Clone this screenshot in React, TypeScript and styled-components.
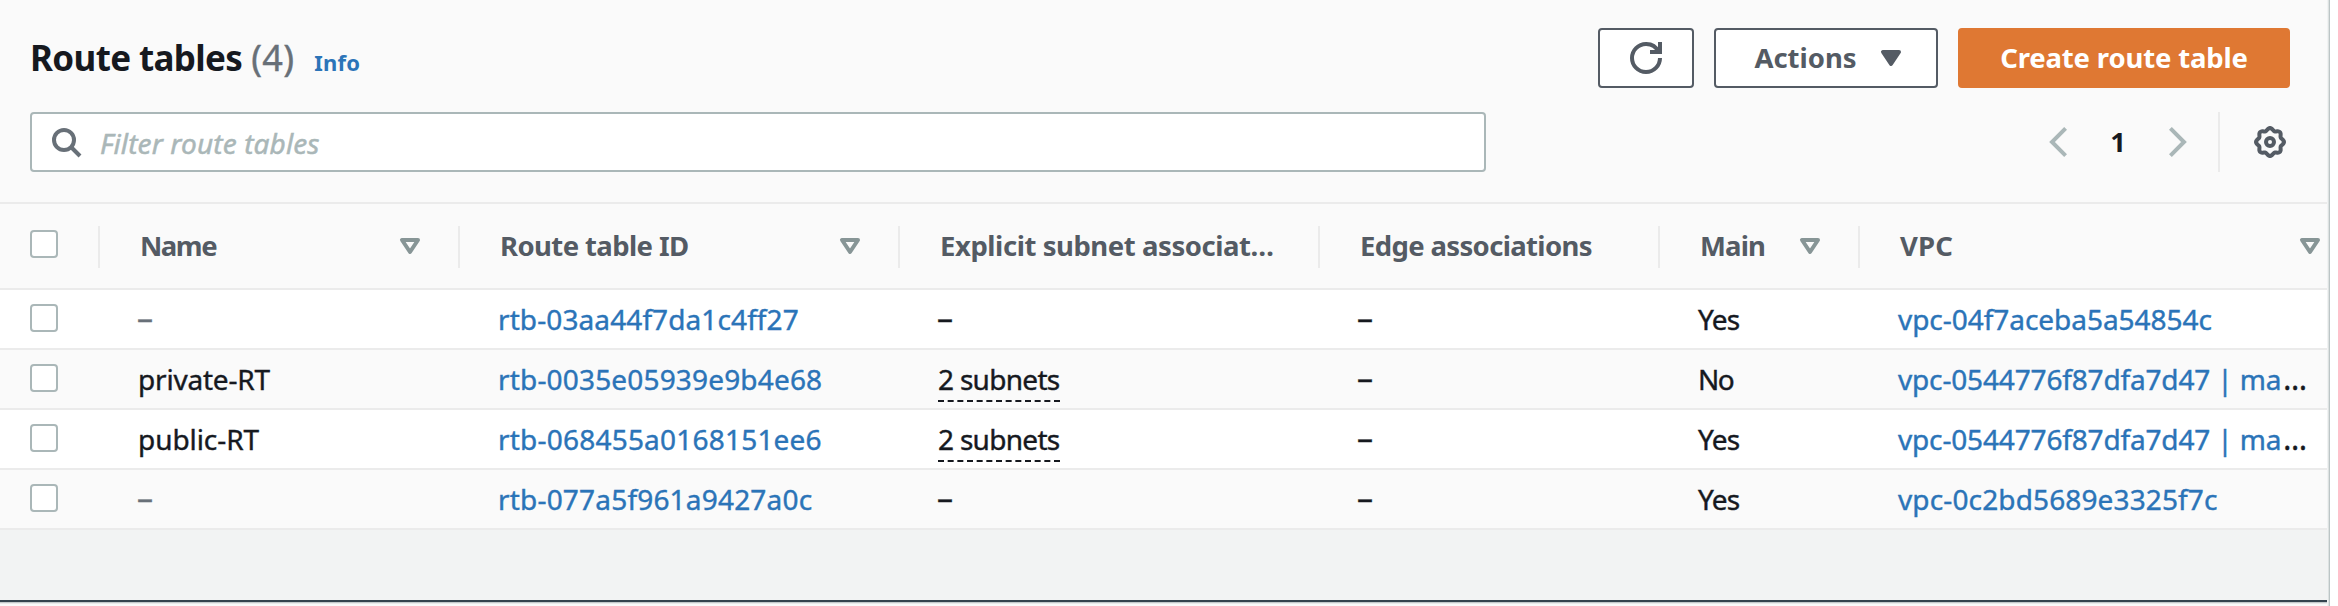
import React from "react";
import styled, { createGlobalStyle } from "styled-components";

const colors = {
  text: "#16191f",
  muted: "#545b64",
  faint: "#687078",
  link: "#2b74b8",
  line: "#ebebeb",
  control: "#aab7b8",
  panel: "#fafafa",
  empty: "#f2f3f3",
  sort: "#879596",
  primary: "#df7833",
};

const GlobalStyle = createGlobalStyle`
  *, *::before, *::after { box-sizing: border-box; }
  body {
    margin: 0;
    background: #fff;
    color: ${colors.text};
    font-family: "Noto Sans", "Open Sans", sans-serif;
    font-size: 28px;
    overflow: hidden;
  }
  svg { display: block; flex: none; }
`;

const Page = styled.div`
  display: flex;
  width: 2338px;
  height: 606px;
  background: #fff;
`;

const Panel = styled.section`
  display: flex;
  flex-direction: column;
  width: 2327px;
  background: ${colors.panel};
`;

const Edge = styled.div`
  width: 3px;
  background: linear-gradient(to right, #f1f3f3 0 1px, #dde1e1 1px 2px, #bcc5c6 2px 3px);
`;

const Toolbar = styled.header`
  display: flex;
  flex-direction: column;
  gap: 24px;
  height: 204px;
  padding: 28px 37px 0 30px;
  border-bottom: 2px solid ${colors.line};
`;

const ToolbarRow = styled.div`
  display: flex;
  justify-content: space-between;
  align-items: center;
  height: 60px;
`;

const Heading = styled.div`
  display: flex;
  align-items: baseline;
  padding-top: 4px;
  line-height: 60px;
`;

const Title = styled.h1`
  margin: 0;
  font-size: 35px;
  font-weight: 700;
  letter-spacing: -0.64px;
`;

const Count = styled.span`
  margin-left: 9px;
  font-size: 36px;
  letter-spacing: 0.3px;
  color: ${colors.faint};
  -webkit-text-stroke: 0.4px currentColor;
`;

const InfoLink = styled.a`
  margin-left: 20px;
  font-size: 22px;
  font-weight: 700;
  letter-spacing: 0.2px;
  color: ${colors.link};
`;

const ButtonGroup = styled.div`
  display: flex;
  gap: 20px;
`;

const Button = styled.button<{ $width: number; $primary?: boolean; $spacing?: number }>`
  display: flex;
  align-items: center;
  justify-content: center;
  gap: 18px;
  width: ${(p) => p.$width}px;
  height: 60px;
  padding: 0;
  border: 2px solid ${(p) => (p.$primary ? colors.primary : colors.muted)};
  border-radius: 4px;
  background: ${(p) => (p.$primary ? colors.primary : "#fff")};
  color: ${(p) => (p.$primary ? "#fff" : colors.muted)};
  font: 700 27.5px/54px "Noto Sans", sans-serif;
  letter-spacing: ${(p) => p.$spacing ?? 0}px;
`;

const MenuButton = styled(Button)`
  padding-left: 9px;
`;

const ButtonLabel = styled.span`
  padding-bottom: 0;
`;

const SearchBox = styled.label`
  display: flex;
  align-items: center;
  gap: 18px;
  width: 1456px;
  height: 60px;
  padding-left: 18px;
  border: 2px solid ${colors.control};
  border-radius: 4px;
  background: #fff;
  color: ${colors.faint};
`;

const SearchInput = styled.input`
  flex: 1;
  height: 56px;
  padding: 2px 0 0;
  border: 0;
  outline: 0;
  background: transparent;
  font: italic 400 28px "Noto Sans", sans-serif;
  letter-spacing: 0.12px;
  &::placeholder {
    color: ${colors.control};
    opacity: 1;
    -webkit-text-stroke: 0.5px ${colors.control};
  }
`;

const Pagination = styled.nav`
  display: flex;
  align-items: center;
  height: 60px;
  color: ${colors.control};
`;

const PageNumber = styled.span`
  width: 102px;
  padding-bottom: 2px;
  text-align: center;
  font-size: 27.5px;
  font-weight: 700;
  color: ${colors.text};
`;

const Settings = styled.div`
  display: flex;
  align-items: center;
  height: 60px;
  margin-left: 31px;
  padding: 0 4px 0 34px;
  border-left: 2px solid ${colors.line};
  color: ${colors.muted};
`;

const Columns = styled.div`
  display: grid;
  grid-template-columns: 100px 360px 440px 420px 340px 200px 1fr;
`;

const HeaderRow = styled(Columns)`
  height: 86px;
  border-bottom: 2px solid ${colors.line};
  color: ${colors.muted};
`;

const HeaderCell = styled.div`
  display: flex;
  align-items: center;
  min-width: 0;
  padding-left: 40px;
`;

const HeaderLabel = styled.span<{ $spacing: number }>`
  flex: 1;
  padding-bottom: 2px;
  font-size: 27.5px;
  font-weight: 700;
  white-space: nowrap;
  letter-spacing: ${(p) => p.$spacing}px;
`;

const SortSlot = styled.span<{ $last?: boolean }>`
  margin-right: ${(p) => (p.$last ? 1 : 32)}px;
  color: ${colors.sort};
`;

const Divider = styled.span`
  width: 2px;
  height: 42px;
  margin-top: 2px;
  background: ${colors.line};
`;

const CheckCell = styled.div`
  display: flex;
  align-items: center;
  justify-content: space-between;
  padding-left: 30px;
`;

const Checkbox = styled.span<{ $raise: number }>`
  width: 28px;
  height: 28px;
  margin-bottom: ${(p) => p.$raise}px;
  border: 2px solid ${colors.control};
  border-radius: 4px;
  background: #fff;
`;

const Row = styled(Columns)`
  height: 60px;
  border-bottom: 2px solid ${colors.line};
  background: #fff;
  -webkit-text-stroke: 0.4px currentColor;
  &:nth-child(even) {
    background: ${colors.panel};
  }
`;

const Cell = styled.div<{ $spacing?: number; $muted?: boolean }>`
  padding-left: 38px;
  line-height: 58px;
  white-space: nowrap;
  letter-spacing: ${(p) => p.$spacing ?? 0}px;
  color: ${(p) => (p.$muted ? colors.faint : colors.text)};
`;

const Dash = styled.span`
  display: block;
  margin-left: -1px;
  font-size: 32px;
  line-height: 56px;
`;

const Link = styled.a`
  color: ${colors.link};
  -webkit-text-stroke-color: ${colors.link};
`;

const Ellipsis = styled.span`
  margin-left: 2px;
  font-size: 30px;
  line-height: 1;
`;

const SubnetCount = styled.span`
  display: block;
  width: 122px;
  height: 52px;
  border-bottom: 2px dashed ${colors.text};
`;

const Rows = styled.div``;

const EmptyArea = styled.div`
  height: 70px;
  background: ${colors.empty};
`;

const SplitBar = styled.div`
  height: 4px;
  background: linear-gradient(#34434e 0 2px, #c3c9cb 2px 3px, #e8ebeb 3px 4px);
`;

const RefreshIcon = () => (
  <svg width="32" height="32" viewBox="0 0 16 16" fill="none" stroke="currentColor" strokeWidth="2">
    <path d="M10 5h5V0" />
    <path d="M15 8a7 7 0 0 1-14 0 7 7 0 0 1 7-7 6.87 6.87 0 0 1 6.3 4" />
  </svg>
);

const TriangleIcon = ({ filled }: { filled?: boolean }) => (
  <svg width="32" height="32" viewBox="0 0 16 16" fill={filled ? "currentColor" : "none"} stroke="currentColor" strokeWidth="2" strokeLinejoin="round">
    <path d="M4 5h8l-4 6z" />
  </svg>
);

const SearchIcon = () => (
  <svg width="32" height="32" viewBox="0 0 16 16" fill="none" stroke="currentColor" strokeWidth="2">
    <circle cx="7" cy="7" r="5" />
    <path d="M10.5 10.5 15 15" />
  </svg>
);

const ChevronIcon = ({ right }: { right?: boolean }) => (
  <svg width="18" height="30" viewBox="0 0 18 30" fill="none" stroke="currentColor" strokeWidth="4">
    <path d={right ? "M1.4 1.4 15 15 1.4 28.6" : "M16.6 1.4 3 15l13.6 13.6"} />
  </svg>
);

// Outline of an eight-toothed cog around (8, 8).
const cogOutline =
  "M" +
  Array.from({ length: 96 }, (_, i) => {
    const a = (i / 96) * Math.PI * 2;
    const r = 6.4 + 0.6 * Math.cos(8 * a);
    return `${(8 + r * Math.cos(a)).toFixed(2)} ${(8 + r * Math.sin(a)).toFixed(2)}`;
  }).join("L") +
  "Z";

const GearIcon = () => (
  <svg width="32" height="32" viewBox="0 0 16 16" fill="none" stroke="currentColor" strokeWidth="2">
    <path d={cogOutline} strokeLinejoin="round" />
    <circle cx="8" cy="8" r="2" />
  </svg>
);

const headers = [
  { label: "Name", spacing: -1.5, sortable: true },
  { label: "Route table ID", spacing: -0.6, sortable: true },
  { label: "Explicit subnet associat…", spacing: -0.44 },
  { label: "Edge associations", spacing: -0.65 },
  { label: "Main", spacing: -0.87, sortable: true },
  { label: "VPC", spacing: 0.1, sortable: true },
];

type RouteTable = {
  name?: string;
  nameSpacing?: number;
  id: string;
  idSpacing: number;
  subnets?: string;
  main: "Yes" | "No";
  vpc: string;
  vpcSpacing: number;
  clipped?: boolean;
};

const tables: RouteTable[] = [
  { id: "rtb-03aa44f7da1c4ff27", idSpacing: 0.1, main: "Yes", vpc: "vpc-04f7aceba5a54854c", vpcSpacing: -0.04 },
  { name: "private-RT", nameSpacing: -0.2, id: "rtb-0035e05939e9b4e68", idSpacing: 0.17, subnets: "2 subnets", main: "No", vpc: "vpc-0544776f87dfa7d47 | ma", vpcSpacing: -0.16, clipped: true },
  { name: "public-RT", nameSpacing: -0.07, id: "rtb-068455a0168151ee6", idSpacing: 0.21, subnets: "2 subnets", main: "Yes", vpc: "vpc-0544776f87dfa7d47 | ma", vpcSpacing: -0.16, clipped: true },
  { id: "rtb-077a5f961a9427a0c", idSpacing: 0.19, main: "Yes", vpc: "vpc-0c2bd5689e3325f7c", vpcSpacing: 0.13 },
];

export default function App() {
  return (
    <Page>
      <GlobalStyle />
      <Panel>
        <Toolbar>
          <ToolbarRow>
            <Heading>
              <Title>Route tables</Title>
              <Count>(4)</Count>
              <InfoLink>Info</InfoLink>
            </Heading>
            <ButtonGroup>
              <Button $width={96} aria-label="Refresh">
                <RefreshIcon />
              </Button>
              <MenuButton $width={224}>
                <ButtonLabel>Actions</ButtonLabel>
                <TriangleIcon filled />
              </MenuButton>
              <Button $width={332} $primary $spacing={-0.16}>
                <ButtonLabel>Create route table</ButtonLabel>
              </Button>
            </ButtonGroup>
          </ToolbarRow>
          <ToolbarRow>
            <SearchBox>
              <SearchIcon />
              <SearchInput placeholder="Filter route tables" />
            </SearchBox>
            <Pagination>
              <ChevronIcon />
              <PageNumber>1</PageNumber>
              <ChevronIcon right />
              <Settings>
                <GearIcon />
              </Settings>
            </Pagination>
          </ToolbarRow>
        </Toolbar>
        <HeaderRow>
          <CheckCell>
            <Checkbox $raise={4} />
            <Divider />
          </CheckCell>
          {headers.map((h, i) => {
            const last = i === headers.length - 1;
            return (
              <HeaderCell key={h.label}>
                <HeaderLabel $spacing={h.spacing}>{h.label}</HeaderLabel>
                {h.sortable && (
                  <SortSlot $last={last}>
                    <TriangleIcon />
                  </SortSlot>
                )}
                {!last && <Divider />}
              </HeaderCell>
            );
          })}
        </HeaderRow>
        <Rows>
          {tables.map((t) => (
            <Row key={t.id}>
              <CheckCell>
                <Checkbox $raise={2} />
              </CheckCell>
              <Cell $spacing={t.nameSpacing} $muted={!t.name}>
                {t.name ?? <Dash>–</Dash>}
              </Cell>
              <Cell $spacing={t.idSpacing}>
                <Link>{t.id}</Link>
              </Cell>
              <Cell $spacing={t.subnets ? -0.7 : 0}>
                {t.subnets ? <SubnetCount>{t.subnets}</SubnetCount> : <Dash>–</Dash>}
              </Cell>
              <Cell>
                <Dash>–</Dash>
              </Cell>
              <Cell $spacing={t.main === "No" ? -1.6 : -0.8}>{t.main}</Cell>
              <Cell $spacing={t.vpcSpacing}>
                <Link>{t.vpc}</Link>
                {t.clipped && <Ellipsis>…</Ellipsis>}
              </Cell>
            </Row>
          ))}
        </Rows>
        <EmptyArea />
        <SplitBar />
      </Panel>
      <Edge />
    </Page>
  );
}
